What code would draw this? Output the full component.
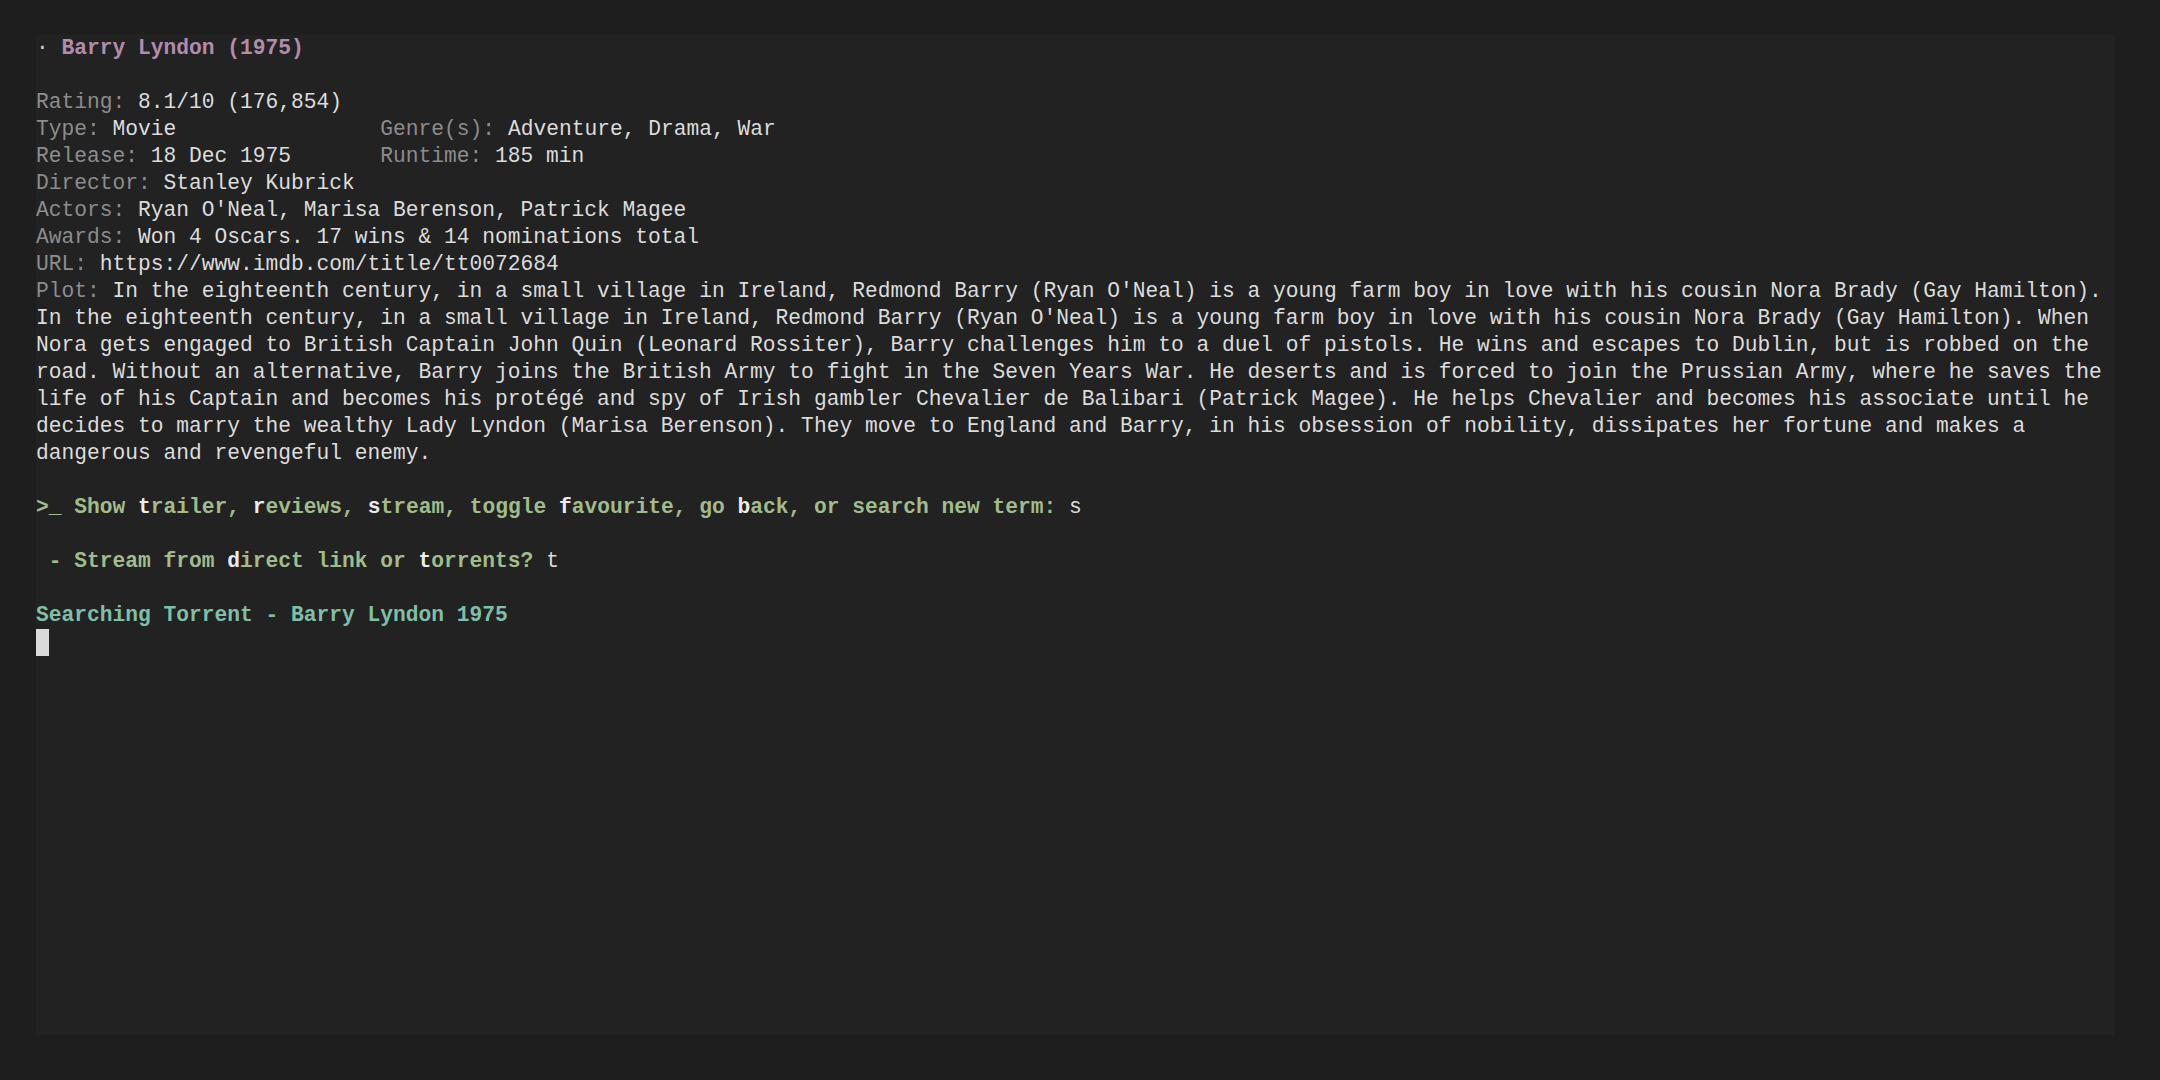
import React from "react";

const mono = "font-['Liberation_Mono','DejaVu_Sans_Mono',monospace] text-[21.25px] leading-[27px]";

const plot = [
  "In the eighteenth century, in a small village in Ireland, Redmond Barry (Ryan O'Neal) is a young farm boy in love with his cousin Nora Brady (Gay Hamilton). When",
  "Nora gets engaged to British Captain John Quin (Leonard Rossiter), Barry challenges him to a duel of pistols. He wins and escapes to Dublin, but is robbed on the",
  "road. Without an alternative, Barry joins the British Army to fight in the Seven Years War. He deserts and is forced to join the Prussian Army, where he saves the",
  "life of his Captain and becomes his protégé and spy of Irish gambler Chevalier de Balibari (Patrick Magee). He helps Chevalier and becomes his associate until he",
  "decides to marry the wealthy Lady Lyndon (Marisa Berenson). They move to England and Barry, in his obsession of nobility, dissipates her fortune and makes a",
  "dangerous and revengeful enemy.",
];

function Field({ label, value }: { label: string; value: string }) {
  return (
    <>
      <span className="text-[#8c8c8c]">{label}: </span>
      <span className="text-[#dcdcdc]">{value}</span>
    </>
  );
}

// a key letter in the prompt
function K({ c }: { c: string }) {
  return <span className="text-[#ececec]">{c}</span>;
}

function Blank() {
  return <div className="h-[27px]" />;
}

export default function App() {
  return (
    <div className="min-h-screen w-full bg-[#1e1e1e] pt-[35px] pl-[36px]">
      <div className={`w-[2078px] h-[1000px] bg-[#222222] text-[#dcdcdc] whitespace-pre ${mono}`}>
        <div>
          <span className="text-[#d0d0d0]">· </span>
          <span className="font-bold text-[#b18cab]">Barry Lyndon (1975)</span>
        </div>
        <Blank />
        <div><Field label="Rating" value="8.1/10 (176,854)" /></div>
        <div>
          <Field label="Type" value={"Movie".padEnd(21)} />
          <Field label="Genre(s)" value="Adventure, Drama, War" />
        </div>
        <div>
          <Field label="Release" value={"18 Dec 1975".padEnd(18)} />
          <Field label="Runtime" value="185 min" />
        </div>
        <div><Field label="Director" value="Stanley Kubrick" /></div>
        <div><Field label="Actors" value="Ryan O'Neal, Marisa Berenson, Patrick Magee" /></div>
        <div><Field label="Awards" value="Won 4 Oscars. 17 wins & 14 nominations total" /></div>
        <div><Field label="URL" value="https://www.imdb.com/title/tt0072684" /></div>
        <div>
          <Field
            label="Plot"
            value="In the eighteenth century, in a small village in Ireland, Redmond Barry (Ryan O'Neal) is a young farm boy in love with his cousin Nora Brady (Gay Hamilton)."
          />
        </div>
        {plot.map((l, i) => (
          <div key={i}>{l}</div>
        ))}
        <Blank />
        <div>
          <span className="font-bold text-[#a1bc8b]">
            {">_ Show "}<K c="t" />{"railer, "}<K c="r" />{"eviews, "}<K c="s" />{"tream, toggle "}
            <K c="f" />{"avourite, go "}<K c="b" />{"ack, or search new term: "}
          </span>
          <span>s</span>
        </div>
        <Blank />
        <div>
          <span className="font-bold text-[#a1bc8b]">
            {" - Stream from "}<K c="d" />{"irect link or "}<K c="t" />{"orrents? "}
          </span>
          <span>t</span>
        </div>
        <Blank />
        <div className="font-bold text-[#7fbfa7]">Searching Torrent - Barry Lyndon 1975</div>
        <div className="h-[27px] w-[13px] bg-[#dadada]" />
      </div>
    </div>
  );
}
